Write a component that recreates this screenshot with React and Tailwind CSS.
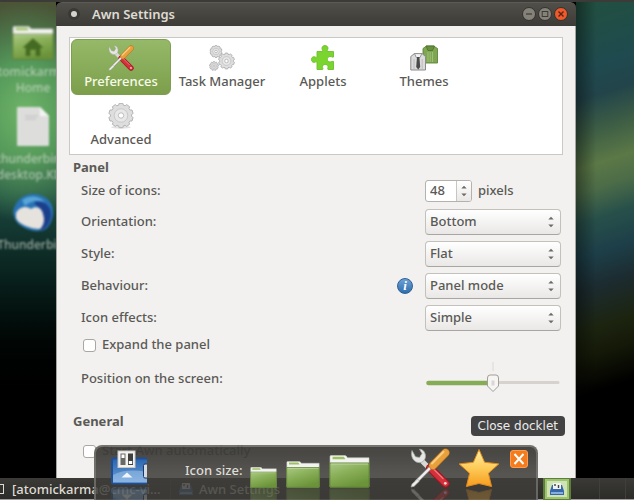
import React, { useState } from "react";

function gearPath(cx, cy, outer, inner, teeth) {
  const step = (Math.PI * 2) / teeth;
  const pt = (r, a) => `${(cx + r * Math.cos(a)).toFixed(2)} ${(cy + r * Math.sin(a)).toFixed(2)}`;
  let d = "";
  for (let i = 0; i < teeth; i++) {
    const a = i * step - Math.PI / 2;
    d += `${i ? "L" : "M"}${pt(inner, a - step * 0.36)}L${pt(outer, a - step * 0.24)}L${pt(outer, a + step * 0.24)}L${pt(inner, a + step * 0.36)}`;
  }
  return d + "Z";
}

function Gear({ cx, cy, r, teeth }) {
  return (
    <g>
      <path d={gearPath(cx, cy, r, r * 0.86, teeth)} fill="#dedede" stroke="#b4b4b4" strokeWidth="1" strokeLinejoin="round" />
      <circle cx={cx} cy={cy} r={r * 0.55} fill="#e8e8e8" stroke="#c2c2c2" strokeWidth="0.8" />
      <circle cx={cx} cy={cy} r={r * 0.22} fill="#fff" stroke="#b0b0b0" strokeWidth="0.8" />
    </g>
  );
}

function ToolsIcon({ className }) {
  return (
    <svg viewBox="0 0 40 40" className={className} aria-hidden="true">
      <path d="M12 13L20 21" stroke="#d8d8d6" strokeWidth="5" />
      <path d="M2 2.5C0.5 8 3 13.5 8 14.5C13 15.5 16.5 11 15.2 6C14.4 3 12 1 9.5 1.2L12 5.5L9.5 9.5L5.5 8.8Z" fill="#e6e6e4" stroke="#a8a8a6" strokeWidth="0.8" strokeLinejoin="round" />
      <path d="M20 20L35.5 35.5" stroke="#a31420" strokeWidth="8" strokeLinecap="round" />
      <path d="M20 20L35.5 35.5" stroke="#d2303a" strokeWidth="6" strokeLinecap="round" />
      <path d="M21 18.5L33 30.5" stroke="#ef7b7d" strokeWidth="1.3" strokeLinecap="round" />
      <circle cx="35.3" cy="35.3" r="1.4" fill="#f3d5d5" />
      <path d="M23 17L6 34" stroke="#8f8f8d" strokeWidth="3.6" />
      <path d="M23 17L6 34" stroke="#efefed" strokeWidth="2.4" />
      <path d="M7.5 31L2 36L1 39L4 38.4L9.5 33Z" fill="#ededeb" stroke="#a0a09e" strokeWidth="0.7" />
      <path d="M23 17.5L35.5 4.8" stroke="#b9701f" strokeWidth="8.4" strokeLinecap="round" />
      <path d="M23 17.5L35.5 4.8" stroke="#e8a03c" strokeWidth="7" strokeLinecap="round" />
      <path d="M22 15.5L33.5 3.8" stroke="#f8cd80" strokeWidth="2" strokeLinecap="round" />
    </svg>
  );
}

function GearsIcon() {
  return (
    <svg viewBox="0 0 26 26" className="size-[26px]" aria-hidden="true">
      <Gear cx={7} cy={6.5} r={6} teeth={10} />
      <Gear cx={17.5} cy={16} r={8} teeth={10} />
      <Gear cx={5} cy={21} r={4.4} teeth={9} />
    </svg>
  );
}

function GearIcon() {
  return (
    <svg viewBox="0 0 26 26" className="size-[26px]" aria-hidden="true">
      <ellipse cx="13" cy="24.3" rx="10" ry="1.5" fill="#e2e2e2" />
      <Gear cx={13} cy={12.5} r={12.3} teeth={10} />
    </svg>
  );
}

function PuzzleIcon() {
  return (
    <svg viewBox="0 0 26 26" className="size-[26px]" aria-hidden="true">
      <path
        d="M7 6.5H12.5C13.2 5.6 11.8 4.6 12 3C12.2 1.3 13.5 0.6 15 0.6C16.6 0.6 17.9 1.5 18 3C18.1 4.6 16.6 5.6 17.4 6.5H23.5V12C22.5 12.6 21.6 11.4 20 11.5C18.3 11.7 17.3 12.7 17.3 14.2C17.3 15.8 18.4 17 20 17C21.6 17 22.5 15.8 23.5 16.5V24.5H18C17.2 23.6 18.2 22.8 18 21.5C17.8 20.2 16.6 19.4 15.2 19.4C13.7 19.4 12.6 20.2 12.5 21.5C12.4 22.8 13.4 23.6 12.6 24.5H7V17C6.2 16.2 5.2 17.6 3.8 17.4C2.2 17.2 1.4 16 1.4 14.5C1.4 13 2.4 11.8 3.8 11.7C5.2 11.6 6.2 12.9 7 12.2Z"
        fill="#7bd52f"
        stroke="#6cc02a"
        strokeWidth="0.9"
        strokeLinejoin="round"
      />
    </svg>
  );
}

function ThemesIcon() {
  return (
    <svg viewBox="0 0 28 26" className="h-[26px] w-7" aria-hidden="true">
      <path d="M13 3.5L16.5 1H23.5L27.5 3.5V18H13Z" fill="#7fa653" stroke="#5e8439" strokeWidth="0.9" />
      <path d="M16 1H24.5L22.5 5.5H18Z" fill="#688f42" stroke="#4c7029" strokeWidth="0.8" />
      <path d="M18 7V17M22.5 7V17M20.2 7V17" stroke="#a3c47b" strokeWidth="0.9" />
      <path d="M0.8 11.5L4.5 8.5H12L15.5 11.5V25H0.8Z" fill="#dcdcdc" stroke="#8b8b8b" />
      <path d="M4.5 8.6H11.8L10 12.5H6.3Z" fill="#f3f3f3" stroke="#858585" strokeWidth="0.8" />
      <path d="M7 12H9.4L10.2 22L8.2 24.5L6.2 22Z" fill="#4a4a4a" />
      <path d="M4 14V25M12.2 14V25" stroke="#b5b5b5" strokeWidth="0.8" />
    </svg>
  );
}

function FolderIcon({ className, home = false }) {
  return (
    <svg viewBox="0 0 40 33" preserveAspectRatio="none" className={className} aria-hidden="true">
      <defs>
        <linearGradient id="folder" x1="0" y1="0" x2="0.5" y2="1">
          <stop offset="0" stopColor="#a9c983" />
          <stop offset="0.5" stopColor="#88ae57" />
          <stop offset="1" stopColor="#6b9439" />
        </linearGradient>
      </defs>
      <path d="M1 32V1.5Q1 0.5 2 0.5H15.5Q17 0.5 18 2.8H39V32Z" fill="#f3f3f1" stroke="#c3c6bb" strokeWidth="0.6" />
      <path d="M3.5 1.8H14.5L16 4.2H3.5Z" fill="#9cc165" />
      <path d="M0.8 8H39.2V31.2Q39.2 32.2 38.2 32.2H1.8Q0.8 32.2 0.8 31.2Z" fill="url(#folder)" stroke="#587b2e" strokeWidth="0.9" />
      <path d="M1.8 9H38.2" stroke="#c5dba8" strokeWidth="0.8" />
      {home && <path d="M20 12L30 21H27V29H22.5V23H17.5V29H13V21H10Z" fill="#456b22" />}
    </svg>
  );
}

function StarIcon() {
  return (
    <svg viewBox="0 0 42 40" className="h-10 w-[42px]" aria-hidden="true">
      <defs>
        <linearGradient id="star" x1="0" y1="0" x2="0" y2="1">
          <stop offset="0" stopColor="#fff0a8" />
          <stop offset="0.5" stopColor="#fdcb58" />
          <stop offset="1" stopColor="#f79c1e" />
        </linearGradient>
      </defs>
      <path d="M21 1.5L26.6 14.3L40.8 15.9L30.4 25.3L33.6 38.5L21 35.5L8.4 38.5L11.6 25.3L1.2 15.9L15.4 14.3Z" fill="url(#star)" stroke="#e08a1a" strokeLinejoin="round" />
    </svg>
  );
}

function DockletIcon() {
  return (
    <svg viewBox="0 0 37 36" className="h-9 w-[37px]" aria-hidden="true">
      <defs>
        <linearGradient id="screen" x1="0" y1="0" x2="0" y2="1">
          <stop offset="0" stopColor="#2c66ae" />
          <stop offset="1" stopColor="#6c9fd8" />
        </linearGradient>
      </defs>
      <path d="M3 7.5H37V34.5H3Q1 34.5 1 32.5V9.5Q1 7.5 3 7.5Z" fill="#1e4f97" />
      <path d="M4 9.5H37V32.5H3V10.5Z" fill="url(#screen)" />
      <path d="M3 25Q16 18 37 22V32.5H3Z" fill="#a8c9ee" opacity="0.5" />
      <path d="M11.5 27.5L17 22.5L22.5 27.5Z" fill="#eef5fc" />
      <rect x="33.5" y="14" width="6" height="14" rx="1.5" fill="#d4dae2" stroke="#1b3765" />
      <rect x="8" y="1" width="17" height="16.5" fill="#f2f2f0" stroke="#c9c9c6" />
      <rect x="10.5" y="3.5" width="5" height="11.5" fill="#696967" />
      <rect x="11.5" y="4.5" width="3" height="3.5" fill="#fff" />
      <rect x="18" y="3.5" width="5" height="11.5" fill="#3f3f3e" />
      <rect x="18.8" y="11" width="3.4" height="3" fill="#fff" />
    </svg>
  );
}

function ThunderbirdIcon() {
  return (
    <svg viewBox="0 0 42 40" className="h-10 w-[42px]" aria-hidden="true">
      <path d="M1 20C2 9 10 1 21 1C33 1 42 9 41 21C40 32 33 39 27 38C20 39 6 34 3 26Z" fill="#2873b4" />
      <path d="M10 7C18 1 28 3 33 9C26 7 18 8 13 13Z" fill="#58a5d8" />
      <path d="M22 9C32 7 40 13 39 23C38 32 32 38 27 37C33 28 33 17 24 12Z" fill="#1c3f8c" />
      <path d="M4 20C7 14 14 12 19 16C24 12 30 15 31 21C33 27 32 32 28 36C18 36 6 31 4 25Z" fill="#e6e2de" />
    </svg>
  );
}

function FileIcon() {
  return (
    <svg viewBox="0 0 34 41" className="mb-1 h-[41px] w-[34px]" aria-hidden="true">
      <path d="M1 2Q1 1 2 1H24L33 10V39Q33 40 32 40H2Q1 40 1 39Z" fill="#dddedc" />
      <path d="M24 1V10H33Z" fill="#f4f4f4" />
      <path d="M9 10H22M9 13H20" stroke="#c6c8c6" strokeWidth="1.5" />
    </svg>
  );
}

function FloppyIcon({ className }) {
  return (
    <svg viewBox="0 0 14 14" className={className} aria-hidden="true">
      <path d="M2 3H12L14 9V13H0V9Z" fill="#3868ac" />
      <path d="M1 10H13V12H1Z" fill="#87aede" />
      <rect x="3" y="1" width="8" height="6" fill="#f1f1ef" />
      <path d="M5 2V4M8.5 3V6" stroke="#444" strokeWidth="1.4" />
    </svg>
  );
}

function Arrows() {
  return (
    <svg viewBox="0 0 6 12" className="h-3 w-1.5" aria-hidden="true">
      <path d="M0.3 3.5L3 0.7L5.7 3.5ZM0.3 8.5L3 11.3L5.7 8.5Z" fill="#6c6a67" />
    </svg>
  );
}

const tabs = [
  { name: "Preferences", icon: <ToolsIcon className="size-[26px]" /> },
  { name: "Task Manager", icon: <GearsIcon /> },
  { name: "Applets", icon: <PuzzleIcon /> },
  { name: "Themes", icon: <ThemesIcon /> },
  { name: "Advanced", icon: <GearIcon /> },
];

const choices = [
  { id: "orientation", label: "Orientation:", options: ["Bottom", "Top", "Left", "Right"] },
  { id: "style", label: "Style:", options: ["Flat", "3D", "Curved", "None"] },
  { id: "behaviour", label: "Behaviour:", options: ["Panel mode", "Intelligent hide"], info: true },
  { id: "effects", label: "Icon effects:", options: ["Simple", "Classic", "Fade"] },
];

function TitleBar() {
  const round = "flex size-3.5 items-center justify-center rounded-full border border-[#33322e]";
  return (
    <header className="flex h-6 shrink-0 items-center rounded-t-md border-t border-[#5c5b55] bg-linear-to-b from-[#504f49] to-[#3c3b37] pr-2 pb-0.5 pl-3">
      <span className="flex size-3 items-center justify-center rounded-full bg-[#3a3935]">
        <span className="size-1.5 rounded-full bg-[#d6d3cc]" />
      </span>
      <h1 className="ml-3 flex-1 text-[13px] leading-5 font-semibold text-[#dfdbd2]">Awn Settings</h1>
      <div className="flex gap-0.5">
        <button aria-label="Minimise" className={`${round} bg-[#85827a]`}>
          <svg viewBox="0 0 8 8" className="size-2"><path d="M1 4H7" stroke="#3c3b37" strokeWidth="1.2" /></svg>
        </button>
        <button aria-label="Maximise" className={`${round} bg-[#85827a]`}>
          <svg viewBox="0 0 8 8" className="size-2"><rect x="1.2" y="1.5" width="5.6" height="5" fill="none" stroke="#3c3b37" /></svg>
        </button>
        <button aria-label="Close" className={`${round} bg-[#ee5a2c]`}>
          <svg viewBox="0 0 8 8" className="size-2"><path d="M1.5 1.5L6.5 6.5M6.5 1.5L1.5 6.5" stroke="#5b2412" strokeWidth="1.4" /></svg>
        </button>
      </div>
    </header>
  );
}

function Tick({ label }) {
  return (
    <label className="flex h-6 items-center gap-1.5 pl-2.5">
      <input type="checkbox" className="size-[13px] appearance-none rounded-[3px] border border-[#aaa6a1] bg-white checked:bg-[#86ad56]" />
      {label}
    </label>
  );
}

function Preferences() {
  const [position, setPosition] = useState(50);
  return (
    <form className="pr-0.5 pl-1">
      <h2 className="mt-0.5 h-5 leading-5 font-bold">Panel</h2>
      <div className="mt-0.5 flex h-6 items-center pl-2">
        <label htmlFor="size" className="flex-1">Size of icons:</label>
        <div className="flex w-[136px] items-center">
          <div className="flex h-[22px] w-[47px] overflow-hidden rounded-[3px] border border-[#b5b1ac] bg-white">
            <input id="size" type="text" inputMode="numeric" defaultValue="48" className="w-[31px] border-r border-[#c9c6c2] pl-1 outline-none" />
            <span className="flex flex-1 items-center justify-center bg-linear-to-b from-white to-[#e9e8e6]"><Arrows /></span>
          </div>
          <span className="ml-1.5">pixels</span>
        </div>
      </div>
      <div className="mt-1.5 flex flex-col gap-1.5">
        {choices.map((c) => (
          <div key={c.id} className="flex h-[26px] items-center pl-2">
            <label htmlFor={c.id} className="flex-1">{c.label}</label>
            {c.info && (
              <span className="mr-3 flex size-4 items-center justify-center rounded-full border border-[#2b5f96] bg-linear-to-b from-[#6ea2d6] to-[#2f6dab] font-['Liberation_Serif',serif] text-[13px] leading-3 font-bold text-white italic">i</span>
            )}
            <div className="relative h-[26px] w-[136px]">
              <select id={c.id} className="size-full appearance-none rounded-[4px] border border-[#c4c0bb] border-b-[#a9a5a0] bg-linear-to-b from-white to-[#e9e8e6] pl-1 outline-none">
                {c.options.map((o) => <option key={o}>{o}</option>)}
              </select>
              <span className="pointer-events-none absolute inset-y-0 right-[7px] flex items-center"><Arrows /></span>
            </div>
          </div>
        ))}
      </div>
      <div className="mt-0.5"><Tick label="Expand the panel" /></div>
      <div className="mt-2.5 flex h-6 items-center pl-2">
        <label htmlFor="position" className="flex-1">Position on the screen:</label>
        <div className="relative w-[136px]">
          <svg viewBox="0 0 136 34" className="h-[34px] w-full" aria-hidden="true">
            <path d="M68 0V9" stroke="#dad8d5" />
            <path d="M3 20.5H133" stroke="#d6d2ce" strokeWidth="3" strokeLinecap="round" />
            <path d="M3.5 21H64" stroke="#86ac56" strokeWidth="4.5" strokeLinecap="round" />
            <path d="M65 13H71Q73.5 13 73.5 16V24L68 29.5L62.5 24V16Q62.5 13 65 13Z" fill="#f6f5f4" stroke="#a19d98" />
            <path d="M66.5 18.5H69.5V23.5H66.5Z" fill="#d9d7d4" />
          </svg>
          <input id="position" type="range" value={position} onChange={(e) => setPosition(e.target.value)} className="absolute inset-0 size-full opacity-0" />
        </div>
      </div>
      <h2 className="mt-5 h-5 leading-5 font-bold">General</h2>
      <div className="mt-2"><Tick label="Start Awn automatically" /></div>
    </form>
  );
}

function SettingsWindow() {
  return (
    <main className="z-10 flex min-w-0 flex-1 flex-col">
      <TitleBar />
      <div className="min-h-0 flex-1 overflow-hidden border-x border-[#a5a5a0] bg-[#f2f1ef] pt-[11px] pr-3 pl-3">
        <nav className="flex flex-wrap gap-x-px gap-y-0.5 border border-[#cbc9c6] bg-white px-px pt-px pb-px">
          {tabs.map((t, i) => (
            <button
              key={t.name}
              className={`flex h-14 w-[100px] flex-col items-center rounded-md border pt-[5px] leading-5 ${
                i === 0 ? "border-[#7d9f50] bg-linear-to-b from-[#95b968] to-[#7d9f4c] text-[#f7fbe9]" : "border-transparent"
              }`}
            >
              {t.icon}
              <span className="whitespace-nowrap">{t.name}</span>
            </button>
          ))}
        </nav>
        <Preferences />
      </div>
    </main>
  );
}

function DesktopItem({ children, lines }) {
  return (
    <li className="flex w-28 flex-col items-center text-center text-[12px] leading-4 text-[#d5ddd3]">
      {children}
      {lines.map((l) => <span key={l} className="opacity-70">{l}</span>)}
    </li>
  );
}

function DockItem({ children }) {
  return (
    <button className="relative">
      {children}
      <span className="absolute top-full left-0 block -scale-y-100 opacity-25">{children}</span>
    </button>
  );
}

function Dock() {
  return (
    <section className="absolute right-24 bottom-0 left-[94px] z-30 h-[55px] overflow-hidden rounded-t-lg border-2 border-b-0 border-[#85858099] bg-linear-to-b from-[#3c3b37f2] via-[#3e3d39de] to-[#3e3d39d4]">
      <div className="flex h-full items-end pr-2 pb-3 pl-3.5">
        <div className="mb-0.5 flex"><DockItem><DockletIcon /></DockItem></div>
        <span className="mb-2 ml-[38px] flex-1 leading-5 whitespace-nowrap text-[#dedcd6]">Icon size:</span>
        <div className="flex items-end gap-[9px]">
          <DockItem><FolderIcon className="h-[21px] w-[27px]" /></DockItem>
          <DockItem><FolderIcon className="h-[27px] w-[34px]" /></DockItem>
          <DockItem><FolderIcon className="h-[33px] w-[41px]" /></DockItem>
        </div>
        <div className="mr-2.5 ml-10 flex gap-2">
          <DockItem><ToolsIcon className="size-10" /></DockItem>
          <DockItem><StarIcon /></DockItem>
        </div>
        <button aria-label="Close docklet" className="mb-5 flex size-[18px] items-center justify-center rounded-[3px] border border-[#ff9b50] bg-[#f57c1c]">
          <svg viewBox="0 0 12 12" className="size-3"><path d="M1.5 1L10.5 11M10.5 1L1.5 11" stroke="#fff" strokeWidth="2" /></svg>
        </button>
      </div>
    </section>
  );
}

export default function App() {
  return (
    <div className="relative flex h-screen flex-col overflow-hidden bg-black font-['Noto_Sans','Open_Sans',sans-serif] text-[13px] font-medium text-[#5a5956]">
      <div className="h-0.5 shrink-0 bg-[#3c3b37]" />
      <div className="flex min-h-0 flex-1">
        <aside className="w-14 shrink-0 overflow-hidden bg-linear-to-b from-[#4b5436] via-[#1d4a42] via-40% to-black to-85%">
          <div className="h-full bg-[radial-gradient(ellipse_90px_110px_at_25px_110px,#6fb468_0%,#55995a_45%,transparent_100%)]">
            <ul className="-ml-[23px] flex w-28 flex-col gap-2.5 pt-6 blur-[1px]">
              <DesktopItem lines={["atomickarma's", "Home"]}><FolderIcon home className="mb-1 h-[34px] w-[42px]" /></DesktopItem>
              <DesktopItem lines={["thunderbird-", "desktop.KDE"]}><FileIcon /></DesktopItem>
              <DesktopItem lines={["Thunderbird"]}><div className="mb-1"><ThunderbirdIcon /></div></DesktopItem>
            </ul>
          </div>
        </aside>
        <SettingsWindow />
        <aside className="w-[58px] shrink-0 bg-[linear-gradient(to_right,#00000066,transparent_35%),linear-gradient(162deg,#22503f_0%,#1f4a4f_14%,#22444a_20%,#3d5d45_27%,#5b7846_34%,#4c6c48_39%,#28504a_45%,#1d3f49_52%,#1c2b2f_59%,#1c2410_67%,#151a08_72%,#000_80%)]" />
      </div>
      <footer className="flex h-[22px] shrink-0 items-center border-b border-[#a3989a] bg-linear-to-b from-[#3b3a36] to-[#2b2b29] text-[#dfdbd2]">
        <span className="h-2.5 w-1 border border-l-0 border-[#dfdbd2]" />
        <button className="ml-2 w-[159px] border-r border-[#494844] text-left leading-5 whitespace-nowrap">[atomickarma@cmc-vi…</button>
        <button className="ml-2 flex flex-1 items-center gap-1.5 text-left leading-5 whitespace-nowrap">
          <FloppyIcon className="size-3.5" />
          Awn Settings
        </button>
        <div className="flex h-full w-[89px] items-center">
          <button aria-label="Awn" className="flex h-5 w-6 items-center justify-center border-2 border-[#9cc46f] bg-[#cfe3b4] outline-2 outline-[#5f7d3d]">
            <FloppyIcon className="size-3.5" />
          </button>
          <span className="ml-[30px] h-full w-[27px] border-x border-[#403f3c]" />
        </div>
      </footer>
      <Dock />
      <div role="tooltip" className="absolute right-[69px] bottom-16 z-40 rounded-[4px] bg-[#434343] px-[7px] font-['DejaVu_Sans',sans-serif] text-[12px] leading-5 font-normal text-[#ebebeb]">Close docklet</div>
    </div>
  );
}
